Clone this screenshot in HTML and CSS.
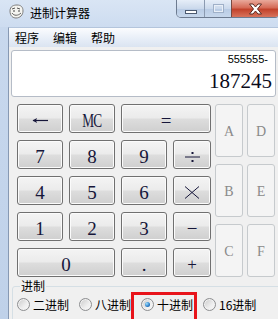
FILE: index.html
```html
<!DOCTYPE html>
<html lang="zh-CN">
<head>
<meta charset="UTF-8" />
<meta name="viewport" content="width=device-width, initial-scale=1" />
<title>进制计算器</title>
<link rel="stylesheet" href="styles.css">
</head>
<body>

<div class="titlebar">
  <svg class="app-icon" width="16" height="15" viewBox="0 0 16 15">
    <path d="M2 7 C2 2 6 1 9 1 C13 1 15 3 15 7 C15 11 12 14 8 14 C5 14 2 12 2 7 Z" fill="#f4f4f0" stroke="#7d7d7d" stroke-width="1"/>
    <path d="M4 5 L7 4 M9 4 L12 5" stroke="#555" stroke-width="1" fill="none"/>
    <path d="M5 7 L7 7 M10 7 L12 7" stroke="#444" stroke-width="1"/>
    <path d="M4 9 C6 12 10 12 13 9" stroke="#666" stroke-width="1" fill="none"/>
  </svg>
  <span class="title">进制计算器</span>
  <div class="caption">
    <div class="cap-btn cap-min"><span class="min-bar"></span></div>
    <div class="cap-btn cap-max"><span class="max-box"></span></div>
    <div class="cap-btn cap-close">
      <svg width="15" height="12" viewBox="0 0 15 12">
        <path d="M1.5 1 L5 1 L7.5 4 L10 1 L13.5 1 L9.5 6 L13.5 11 L10 11 L7.5 8 L5 11 L1.5 11 L5.5 6 Z" fill="#fff" stroke="#5a2a22" stroke-width="1" stroke-linejoin="round"/>
      </svg>
    </div>
  </div>
</div>

<div class="client">
  <div class="menubar">
    <span class="menu-item">程序</span>
    <span class="menu-item">编辑</span>
    <span class="menu-item">帮助</span>
  </div>

  <div class="display">
    <div class="memo">555555-</div>
    <div class="value">187245</div>
  </div>

  <div class="keys">
    <div class="main-keys">
      <button class="key">
        <svg class="sym" width="16" height="7" viewBox="0 0 16 7">
          <path d="M1 3.5 H16" stroke="#16163a" stroke-width="1.2"/>
          <path d="M0.5 3.5 L5 1 L4 3.5 L5 6 Z" fill="#16163a"/>
        </svg>
      </button>
      <button class="key"><span class="narrow">MC</span></button>
      <button class="key wide">=</button>

      <button class="key">7</button>
      <button class="key">8</button>
      <button class="key">9</button>
      <button class="key">
        <svg class="sym" width="15" height="12" viewBox="0 0 15 12">
          <path d="M0 6 H15" stroke="#16163a" stroke-width="1"/>
          <rect x="6.5" y="1" width="2" height="2" fill="#16163a"/>
          <rect x="6.5" y="9" width="2" height="2" fill="#16163a"/>
        </svg>
      </button>

      <button class="key">4</button>
      <button class="key">5</button>
      <button class="key">6</button>
      <button class="key">
        <svg class="sym" width="16" height="13" viewBox="0 0 16 13">
          <path d="M1 0.5 L15 12.5 M15 0.5 L1 12.5" stroke="#16163a" stroke-width="1"/>
        </svg>
      </button>

      <button class="key">1</button>
      <button class="key">2</button>
      <button class="key">3</button>
      <button class="key">&minus;</button>

      <button class="key wide">0</button>
      <button class="key">.</button>
      <button class="key small">+</button>
    </div>
    <div class="hex-keys">
      <button class="hex">A</button>
      <button class="hex">D</button>
      <button class="hex">B</button>
      <button class="hex">E</button>
      <button class="hex">C</button>
      <button class="hex">F</button>
    </div>
  </div>

  <fieldset class="base-group">
    <legend>进制</legend>
    <div class="radios">
      <label class="radio-item"><span class="radio"></span>二进制</label>
      <label class="radio-item"><span class="radio"></span>八进制</label>
      <label class="radio-item marked"><span class="radio checked"></span>十进制</label>
      <label class="radio-item"><span class="radio"></span>16进制</label>
    </div>
  </fieldset>
</div>

</body>
</html>
```

FILE: styles.css
```css
body {
  margin: 0;
  width: 278px;
  height: 319px;
  overflow: hidden;
  background: linear-gradient(#c9d9ee, #bfd1e9);
  font-family: "Noto Sans CJK SC", "Liberation Sans", sans-serif;
  color: #000;
}
.titlebar {
  height: 27px;
  display: flex;
  align-items: flex-start;
  background: linear-gradient(#d9e5f4, #cddcf0);
}
.app-icon {
  margin: 4px 0 0 8px;
}
.title {
  margin-left: 6px;
  margin-top: 5px;
  font-size: 12px;
  line-height: 16px;
  color: #000;
}
.caption {
  margin-left: auto;
  display: flex;
  height: 17px;
  border: 1px solid #6d7b90;
  border-top: none;
  border-radius: 0 0 5px 5px;
  overflow: hidden;
  margin-right: -2px;
}
.cap-btn {
  height: 17px;
  display: flex;
  align-items: center;
  justify-content: center;
}
.cap-min {
  width: 27px;
  background: linear-gradient(#e6eef8, #cbd9ec 50%, #b8cbe4 51%, #c7d7ec);
  border-right: 1px solid #8b9ab0;
}
.cap-max {
  width: 26px;
  background: linear-gradient(#e6eef8, #cbd9ec 50%, #b8cbe4 51%, #c7d7ec);
  border-right: 1px solid #7a4a40;
}
.cap-close {
  width: 47px;
  background: linear-gradient(#e9a99b, #d56b57 45%, #c2422b 55%, #d8745d);
}
.min-bar {
  width: 10px;
  height: 2px;
  margin-top: 6px;
  background: #fff;
  border: 1px solid #4c5a70;
}
.max-box {
  width: 9px;
  height: 7px;
  border: 1px solid #9fb0c8;
  box-shadow: inset 0 0 0 1px #e9eff7;
}
.client {
  height: 291px;
  margin-left: 8px;
  border-left: 1px solid #8799b3;
  border-top: 1px solid #b4c5dc;
  background: #f0f0f0;
}
.menubar {
  height: 19px;
  display: flex;
  background: linear-gradient(#fbfcfe, #e6edf7 60%, #dbe4f1);
}
.menu-item {
  padding: 0 7px;
  font-size: 12px;
  line-height: 19px;
}
.menu-item:first-child {
  padding-left: 6px;
}
.display {
  margin: 3px 0 0 2px;
  width: 263px;
  height: 45px;
  background: #fff;
  border: 1px solid #b5bcc7;
  border-radius: 3px;
  text-align: right;
}
.memo {
  margin-top: 2px;
  padding-right: 7px;
  font-family: "Liberation Sans", Arial, sans-serif;
  font-size: 11px;
  line-height: 13px;
}
.value {
  margin-top: 3px;
  padding-right: 3px;
  font-family: "Liberation Serif", "Times New Roman", serif;
  font-size: 21px;
  line-height: 24px;
  color: #0a0a1a;
}
.keys {
  display: flex;
  gap: 4px;
  margin: 7px 0 0 8px;
}
.main-keys {
  display: grid;
  grid-template-columns: 46px 46px 46px 38px;
  grid-auto-rows: 29px;
  column-gap: 6px;
  row-gap: 7px;
}
.hex-keys {
  display: grid;
  grid-template-columns: 28px 28px;
  grid-auto-rows: 53px;
  column-gap: 4px;
  row-gap: 7px;
}
button {
  margin: 0;
  padding: 0;
  font-family: "Liberation Serif", "Times New Roman", serif;
}
.key {
  border: 1px solid #707070;
  border-radius: 3px;
  background: linear-gradient(#f4f4f4, #ebebeb 48%, #dddddd 52%, #cfcfcf);
  box-shadow: inset 0 0 0 1px #fbfbfb;
  color: #16163a;
  font-size: 19px;
  line-height: 20px;
  padding-top: 4px;
}
.key.wide {
  grid-column: span 2;
}
.key.small {
  font-size: 17px;
}
.sym {
  display: block;
  margin: 0 auto;
}
.narrow {
  display: inline-block;
  transform: scaleX(0.7);
  letter-spacing: -1px;
}
.hex {
  border: 1px solid #c6cacd;
  border-radius: 3px;
  background: #f4f4f4;
  color: #8a8a8a;
  font-size: 14px;
  padding-top: 2px;
}
.base-group {
  margin: 2px 0 0 3px;
  padding: 0 0 12px 4px;
  border: 1px solid #d5dfe5;
  border-radius: 3px;
  width: 270px;
}
.base-group legend {
  margin-left: 3px;
  padding: 0 1px;
  font-size: 12px;
  line-height: 14px;
}
.radios {
  display: flex;
  gap: 10px;
  margin-top: 5px;
  height: 13px;
  align-items: center;
}
.radio-item {
  position: relative;
  display: flex;
  align-items: center;
  gap: 3px;
  font-size: 12px;
  line-height: 13px;
}
.radio {
  position: relative;
  width: 11px;
  height: 11px;
  border: 1px solid #8d8e90;
  border-radius: 50%;
  background: linear-gradient(135deg, #c9c9c9, #eeeeee 60%, #fafafa);
  box-shadow: inset 0 0 0 1px #f2f2f2;
}
.radio.checked::after {
  content: "";
  position: absolute;
  left: 3px;
  top: 3px;
  width: 5px;
  height: 5px;
  border-radius: 50%;
  background: radial-gradient(circle at 35% 35%, #9fe0ff, #2a7cc6 60%, #164f8c);
}
.marked::after {
  content: "";
  position: absolute;
  left: -10px;
  top: -6px;
  right: -4px;
  bottom: -16px;
  border: 3px solid #e8141b;
}
```
